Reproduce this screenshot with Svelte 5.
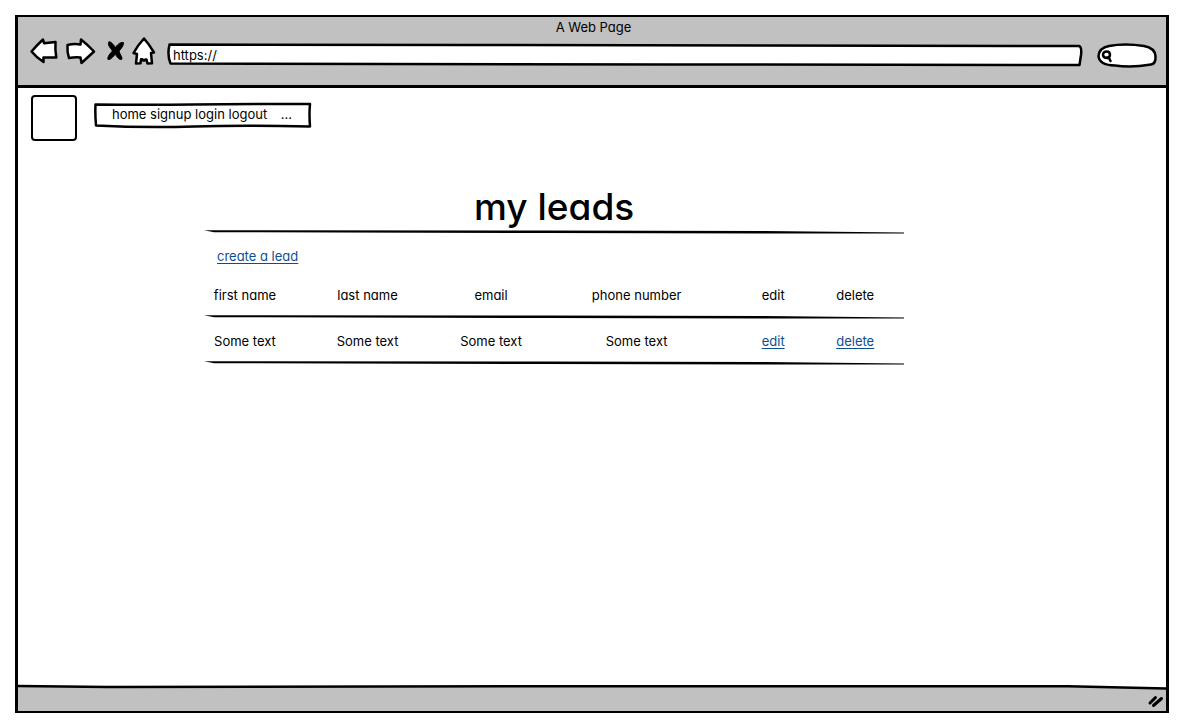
<script lang="ts">
  const links = ['home', 'signup', 'login', 'logout'];
  const columns = ['first name', 'last name', 'email', 'phone number', 'edit', 'delete'];
  const leads = [
    { first: 'Some text', last: 'Some text', email: 'Some text', phone: 'Some text' }
  ];
  let address = $state('https://');
  let query = $state('');
</script>

<div class="window">
  <header>
    <div class="title">A Web Page</div>
    <div class="toolbar">
      <button class="back" aria-label="Back">
        <svg width="28" height="28" viewBox="0 0 28 28">
          <path d="M1.500 14.500Q7 8 13 2.500L14 6.300L25.500 5Q25 13 26.300 20.500L13.500 20.500V25Q7 21 1.500 14.500Z" />
        </svg>
      </button>
      <button class="forward" aria-label="Forward">
        <svg width="30" height="28" viewBox="0 0 30 28">
          <path d="M1.500 8Q8 6.500 14.500 7.500L15 2.500Q22 8 28 14.500Q22 20 15.500 26L14.500 20.500Q9 20 3 21Q1 15 1.500 8Z" />
        </svg>
      </button>
      <button class="stop" aria-label="Stop">
        <svg width="18" height="20" viewBox="0 0 18 20">
          <path class="solid" d="M2 1C4 0 6.500 4 8.500 6.500C10 4 13 1 16.500 1.500C17 4 14 8 12 10C12.500 13 15 15 15 18C13 20 10 16 8.500 13.500C6 15 4 19 1 18.500C0 16 3.500 12 5.500 10C3.500 7 0 4 2 1Z" />
        </svg>
      </button>
      <button class="home" aria-label="Home">
        <svg width="24" height="28" viewBox="0 0 24 28">
          <path d="M12 1.500Q17 7 22 15.500L19 16L20 26.300L15.500 26.500L14.500 22.500H13.500L12.500 23.500H11L10.500 22.300H9L8.500 26.300L4 26.500L5 17L1.500 16Q6 8 12 1.500Z" />
        </svg>
      </button>
      <div class="field address">
        <svg viewBox="0 0 915 24" preserveAspectRatio="none">
          <path d="M2.500 1.500L300 2L911 3Q914 4 913 12L911.500 22L500 21.500L3.500 20.500Q0 12 2.500 1.500Z" />
        </svg>
        <input type="text" aria-label="Address" bind:value={address} />
      </div>
      <div class="field search">
        <svg viewBox="0 0 60 25" preserveAspectRatio="none">
          <path d="M12 3Q28 0 47 3Q58 5 58.500 13Q59 21 54 21.500Q34 25 18 22.500Q2 22 1.500 13Q2 5 12 3Z" />
        </svg>
        <svg class="lens" width="12" height="13" viewBox="0 0 12 13">
          <path class="line" d="M6 2.500Q2 2.500 2 6Q2.500 9 6 9Q9 8.500 9 5.500Q8.500 2.500 6 2.500M6 8.500L8 9L9.500 12" />
        </svg>
        <input type="text" aria-label="Search" bind:value={query} />
      </div>
    </div>
  </header>

  <main>
    <div class="top">
      <div class="logo"></div>
      <nav>
        <svg viewBox="0 0 218 26" preserveAspectRatio="none">
          <path d="M1.500 2.500Q50 3 100 2.500T216 2Q215 12 216 24.500Q150 23 100 24.500T2 23.500Q1 12 1.500 2.500Z" />
        </svg>
        <div class="links">
          {#each links as link}<a href={'#' + link}>{link}</a>{' '}{/each}
          <span>...</span>
        </div>
      </nav>
    </div>

    <section>
      <h1>my leads</h1>
      <div class="create"><a href="#create">create a lead</a></div>
      <table>
        <thead>
          <tr>{#each columns as column}<th>{column}</th>{/each}</tr>
        </thead>
        <tbody>
          {#each leads as lead}
            <tr>
              <td>{lead.first}</td>
              <td>{lead.last}</td>
              <td>{lead.email}</td>
              <td>{lead.phone}</td>
              <td><a href="#edit">edit</a></td>
              <td><a href="#delete">delete</a></td>
            </tr>
          {/each}
        </tbody>
      </table>
    </section>
  </main>

  <footer>
    <svg class="edge" viewBox="0 0 1148 5" preserveAspectRatio="none">
      <path class="ground" d="M0 1L90 1L500 .3L1050 .3L1148 2.500V5H0Z" />
      <path class="line" d="M0 0L90 1L500 .3L1050 .3L1148 2.500" />
    </svg>
    <svg class="grip" width="18" height="14" viewBox="0 0 18 14">
      <path class="line" d="M2 9L7.500 3.500M5.500 11.500L13.500 4.500" />
    </svg>
  </footer>
</div>

<style>
  :global(body) {
    margin: 0;
    background: #fff;
  }

  .window {
    --rule: url("data:image/svg+xml,%3Csvg xmlns='http://www.w3.org/2000/svg' viewBox='0 0 699 4' preserveAspectRatio='none'%3E%3Cpath d='M0 .2L340 .6L560 1L699 2.600V3.400L600 3.500L340 3L10 2.200Z'/%3E%3C/svg%3E");
    box-sizing: border-box;
    display: flex;
    flex-direction: column;
    min-height: calc(100vh - 28px);
    margin: 15px 19px 13px 15px;
    border: 3px solid #000;
    border-top-width: 2px;
    border-bottom-width: 2px;
    font: 13px/16px Inter, sans-serif;
    font-feature-settings: "cv11";
    color: #000;
  }

  header {
    box-sizing: border-box;
    height: 71px;
    padding: 2px 9px 0 12px;
    border-bottom: 3px solid #000;
    background: #c1c1c1;
  }

  .title {
    text-align: center;
  }

  .toolbar {
    display: flex;
    align-items: center;
    height: 32px;
  }

  button {
    display: block;
    flex: none;
    padding: 0;
    border: 0;
    background: none;
  }

  svg {
    display: block;
    overflow: visible;
  }

  path {
    fill: #fff;
    stroke: #000;
    stroke-width: 2.500;
    stroke-linejoin: round;
    stroke-linecap: round;
    vector-effect: non-scaling-stroke;
  }

  .solid {
    fill: #000;
    stroke-width: 1;
  }

  .line {
    fill: none;
  }

  .ground {
    fill: #c1c1c1;
    stroke: none;
  }

  .forward {
    margin-left: 8px;
  }

  .stop {
    margin-left: 11px;
  }

  .home {
    margin-left: 7px;
  }

  .field,
  nav {
    display: grid;
    align-items: center;
  }

  .field > *,
  nav > * {
    grid-area: 1 / 1;
  }

  .field > svg:first-child,
  nav > svg {
    width: 0;
    min-width: 100%;
    height: 0;
    min-height: 100%;
  }

  .address {
    flex: 1;
    height: 24px;
    margin: 8px 14px 0 11px;
  }

  .search {
    flex: none;
    width: 60px;
    height: 25px;
    margin-top: 8px;
  }

  .search .lens {
    margin-left: 4px;
  }

  input {
    box-sizing: border-box;
    width: 100%;
    min-width: 0;
    padding: 0 6px;
    border: 0;
    outline: 0;
    background: none;
    font: inherit;
    color: inherit;
  }

  .search input {
    padding: 0 8px 0 18px;
  }

  main {
    flex: 1;
    padding-top: 7px;
  }

  .top {
    display: flex;
    align-items: flex-start;
    gap: 17px;
    padding-left: 13px;
  }

  .logo {
    box-sizing: border-box;
    width: 46px;
    height: 46px;
    border: 2px solid #000;
    border-radius: 4px;
  }

  nav {
    min-width: 218px;
    height: 26px;
    margin-top: 7px;
  }

  .links {
    padding: 0 18px 2px;
  }

  .links a {
    color: inherit;
    text-decoration: none;
  }

  .links span {
    margin-left: 10px;
  }

  section {
    width: 61%;
    margin-top: 42px;
    margin-left: 16.2%;
  }

  h1 {
    margin: 0;
    padding-bottom: 3px;
    background: var(--rule) bottom / 100% 4px no-repeat;
    font-size: 37px;
    line-height: 48px;
    font-weight: 500;
    text-align: center;
  }

  a {
    color: #0b4f91;
    text-underline-offset: 2px;
  }

  .create {
    padding: 14px 13px 11px;
  }

  table,
  thead,
  tbody {
    display: block;
  }

  tr {
    display: grid;
    grid-template-columns: 82fr 163fr 84fr 207fr 66fr 98fr;
    background: var(--rule) bottom / 100% 4px no-repeat;
  }

  th,
  td {
    padding: 12px 0 16px;
    font-weight: 400;
    text-align: center;
    white-space: nowrap;
  }

  td {
    padding: 14px 0 16px;
  }

  footer {
    display: flex;
    flex-direction: column;
    align-items: flex-end;
    height: 25px;
    background: #c1c1c1;
  }

  .edge {
    width: 100%;
    height: 5px;
    background: #fff;
  }

  .grip {
    margin-top: 3px;
  }

  .grip .line {
    stroke-width: 3;
  }
</style>
